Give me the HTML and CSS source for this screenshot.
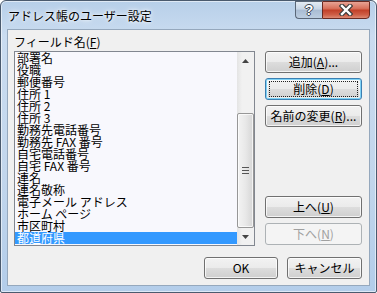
FILE: index.html
```html
<!DOCTYPE html>
<html>
<head>
    <title>アドレス帳のユーザー設定</title>
    <link rel="stylesheet" href="styles.css">
</head>
<body>

<div class="window">
    <div class="titlebar">
        <span class="title">アドレス帳のユーザー設定</span>
        <div class="caption-buttons">
            <div class="cap-btn help-button">?</div>
            <div class="cap-btn close-button">
                <svg width="14" height="12" viewBox="0 0 14 12">
                    <path d="M3 2 L11 10 M11 2 L3 10" stroke="#3b3b3b" stroke-width="4.6" stroke-linecap="square"/>
                    <path d="M3 2 L11 10 M11 2 L3 10" stroke="#ffffff" stroke-width="2.4" stroke-linecap="square"/>
                </svg>
            </div>
        </div>
    </div>

    <div class="client">
        <div class="field-label">フィールド名(<u>F</u>)</div>

        <div class="listbox">
            <ul class="items">
                <li>部署名</li>
                <li>役職</li>
                <li>郵便番号</li>
                <li>住所 1</li>
                <li>住所 2</li>
                <li>住所 3</li>
                <li>勤務先電話番号</li>
                <li>勤務先 FAX 番号</li>
                <li>自宅電話番号</li>
                <li>自宅 FAX 番号</li>
                <li>連名</li>
                <li>連名敬称</li>
                <li>電子メール アドレス</li>
                <li>ホーム ページ</li>
                <li>市区町村</li>
                <li class="selected">都道府県</li>
            </ul>
            <div class="scrollbar">
                <div class="scroll-arrow">
                    <svg width="7" height="4" viewBox="0 0 7 4"><path d="M0 4 L3.5 0 L7 4 Z" fill="#444"/></svg>
                </div>
                <div class="scroll-track"></div>
                <div class="scroll-thumb">
                    <span class="grip"></span>
                </div>
                <div class="scroll-arrow">
                    <svg width="7" height="4" viewBox="0 0 7 4"><path d="M0 0 L7 0 L3.5 4 Z" fill="#444"/></svg>
                </div>
            </div>
        </div>

        <div class="side-buttons">
            <button type="button" class="btn">追加(<u>A</u>)...</button>
            <button type="button" class="btn focused">削除(<u>D</u>)</button>
            <button type="button" class="btn">名前の変更(<u>R</u>)...</button>
            <button type="button" class="btn move-up">上へ(<u>U</u>)</button>
            <button type="button" class="btn" disabled>下へ(<u>N</u>)</button>
        </div>

        <div class="dialog-buttons">
            <button type="button" class="btn ok-button">OK</button>
            <button type="button" class="btn cancel-button">キャンセル</button>
        </div>
    </div>
</div>

</body>
</html>
```

FILE: styles.css
```css
body {
    margin: 0;
    font-family: "Noto Sans CJK JP", "Liberation Sans", sans-serif;
    font-size: 12px;
    background: #ffffff;
}
.window {
    width: 377px;
    height: 293px;
    box-sizing: border-box;
    border: 1px solid #4a5a6e;
    border-radius: 6px 6px 2px 2px;
    padding: 0 6px 6px 6px;
    display: flex;
    flex-direction: column;
    background: linear-gradient(180deg, #b7cfe9 0%, #cadcf0 12%, #c2d6ec 60%, #b3cdea 100%);
    box-shadow: inset 0 0 0 1px rgba(255, 255, 255, 0.55);
}
.titlebar {
    height: 28px;
    display: flex;
    align-items: center;
    padding-left: 1px;
}
.title {
    color: #000;
    line-height: 12px;
    text-shadow: 0 0 6px #ffffff, 0 0 3px #ffffff;
    margin-top: 1px;
}
.caption-buttons {
    margin-left: auto;
    align-self: flex-start;
    display: flex;
}
.cap-btn {
    height: 18px;
    box-sizing: border-box;
    display: flex;
    align-items: center;
    justify-content: center;
}
.help-button {
    width: 27px;
    border: 1px solid #5a6778;
    border-right: none;
    border-radius: 0 0 0 4px;
    background: linear-gradient(180deg, #e3ebf4 0%, #c7d5e6 45%, #a9bcd3 50%, #bccde0 100%);
    color: #fff;
    font-family: "Liberation Sans", sans-serif;
    font-weight: bold;
    font-size: 14px;
    text-shadow: -1px 0 #3c4654, 1px 0 #3c4654, 0 -1px #3c4654, 0 1px #3c4654;
}
.close-button {
    width: 48px;
    border: 1px solid #6a2a22;
    border-radius: 0 0 4px 0;
    background: linear-gradient(180deg, #e7a395 0%, #d8715c 40%, #c2412a 52%, #cf5f47 80%, #dd8a74 100%);
}
.client {
    flex: 1;
    border: 1px solid #95a8bd;
    background: #f0f0f0;
    display: grid;
    grid-template-columns: 241px 97px;
    grid-template-rows: auto 195px auto;
    column-gap: 10px;
    padding: 5px 0 0 6px;
    align-content: start;
}
.field-label {
    grid-column: 1 / span 2;
    line-height: 14px;
    margin-bottom: 2px;
}
.listbox {
    border: 1px solid #828790;
    background: #f8f8fd;
    display: flex;
}
.items {
    list-style: none;
    margin: 0;
    padding: 0;
    flex: 1;
}
.items li {
    height: 12px;
    line-height: 12px;
    padding-left: 2px;
    white-space: nowrap;
}
.items li.selected {
    background: #3399ff;
    color: #fff;
}
.scrollbar {
    width: 17px;
    display: flex;
    flex-direction: column;
    background: linear-gradient(90deg, #e4e4e4 0%, #f1f1f1 30%, #f1f1f1 100%);
}
.scroll-arrow {
    height: 17px;
    display: flex;
    align-items: center;
    justify-content: center;
}
.scroll-track {
    height: 44px;
}
.scroll-thumb {
    height: 115px;
    box-sizing: border-box;
    border: 1px solid #979797;
    border-radius: 2px;
    background: linear-gradient(90deg, #f3f3f3 0%, #e8e8e8 50%, #d6d6d6 100%);
    box-shadow: inset 0 0 0 1px rgba(255, 255, 255, 0.7);
    display: flex;
    align-items: center;
    justify-content: center;
}
.grip {
    width: 7px;
    height: 5px;
    border-top: 1px solid #555;
    border-bottom: 1px solid #555;
    background: linear-gradient(#555, #555) center / 7px 1px no-repeat;
}
.side-buttons {
    display: flex;
    flex-direction: column;
    gap: 5px;
    padding-bottom: 1px;
}
.move-up {
    margin-top: auto;
}
.btn {
    height: 22px;
    box-sizing: border-box;
    border: 1px solid #707070;
    border-radius: 3px;
    background: linear-gradient(180deg, #f2f2f2 0%, #ebebeb 50%, #dddddd 51%, #cfcfcf 100%);
    box-shadow: inset 0 0 0 1px rgba(255, 255, 255, 0.75);
    font-family: "Noto Sans CJK JP", "Liberation Sans", sans-serif;
    font-size: 12px;
    line-height: 18px;
    color: #000;
    padding: 0;
    position: relative;
}
.btn u {
    text-underline-offset: 1px;
}
.btn.focused {
    border-color: #3c7fb1;
    box-shadow: inset 0 0 0 1px #7ed2f6, inset 0 0 0 2px rgba(255, 255, 255, 0.6);
}
.btn.focused::after {
    content: "";
    position: absolute;
    top: 2px;
    left: 3px;
    right: 3px;
    bottom: 2px;
    border: 1px dotted #222;
}
.btn:disabled {
    border-color: #adb2b5;
    background: #f4f4f4;
    box-shadow: none;
    color: #a0a0a0;
}
.dialog-buttons {
    grid-column: 1 / span 2;
    display: flex;
    justify-content: flex-end;
    gap: 9px;
    margin-top: 11px;
}
.ok-button {
    width: 74px;
}
.cancel-button {
    width: 75px;
}
```
